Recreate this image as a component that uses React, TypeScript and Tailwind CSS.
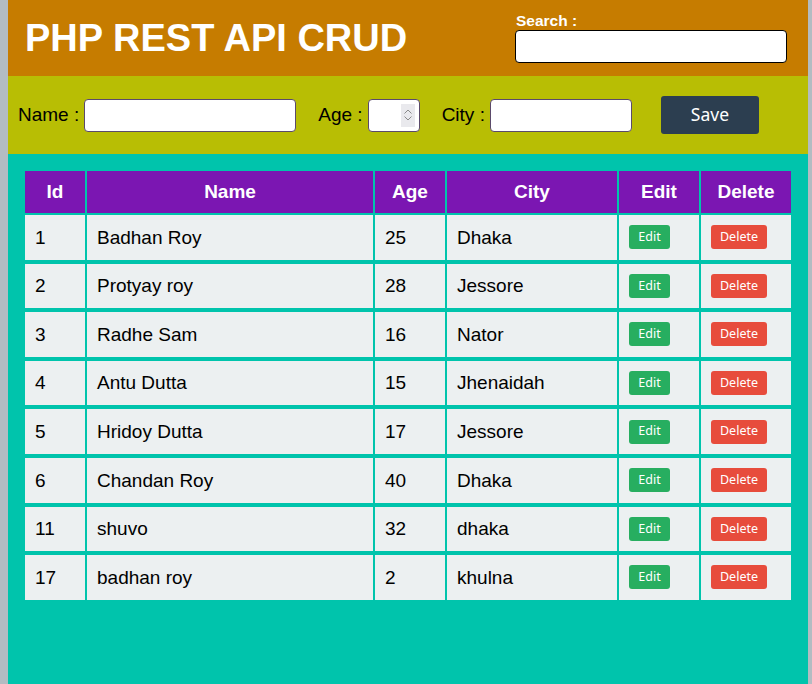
import React from "react";

const rows = [
  { id: "1", name: "Badhan Roy", age: "25", city: "Dhaka" },
  { id: "2", name: "Protyay roy", age: "28", city: "Jessore" },
  { id: "3", name: "Radhe Sam", age: "16", city: "Nator" },
  { id: "4", name: "Antu Dutta", age: "15", city: "Jhenaidah" },
  { id: "5", name: "Hridoy Dutta", age: "17", city: "Jessore" },
  { id: "6", name: "Chandan Roy", age: "40", city: "Dhaka" },
  { id: "11", name: "shuvo", age: "32", city: "dhaka" },
  { id: "17", name: "badhan roy", age: "2", city: "khulna" },
];

const cols = "grid grid-cols-[60px_286px_70px_170px_80px_90px] gap-x-[2px]";

export default function App() {
  return (
    <div className="min-h-[684px] bg-[#b3bcc2] pl-[8px] pr-[4px] font-['Liberation_Sans',Arial,sans-serif]">
      <div className="w-[800px] min-h-[684px] flex flex-col bg-[#00c4ac]">
        <header className="h-[76px] bg-[#c67c00] flex items-center justify-between pl-[17px] pr-[21px]">
          <h1 className="text-white font-bold text-[38px] leading-none">PHP REST API CRUD</h1>
          <div className="flex flex-col w-[272px] -mt-[2px]">
            <label className="text-white font-bold text-[15.5px] leading-[18px] pl-[1px]">Search :</label>
            <input className="h-[33px] w-[272px] bg-white border border-black rounded-[4px] outline-none" />
          </div>
        </header>
        <div className="h-[78px] bg-[#b8be04] flex items-center pl-[10px] text-[19px] text-black">
          <span>Name :</span>
          <input className="ml-[5px] h-[33px] w-[212px] bg-white border border-[#5b4a6b] rounded-[4px] outline-none" />
          <span className="ml-[22px]">Age :</span>
          <div className="relative ml-[5px] h-[33px] w-[52px] bg-white border border-[#5b4a6b] rounded-[4px]">
            <div className="absolute right-[4px] top-[4px] w-[14px] h-[23px] bg-[#e9e9ed] flex flex-col items-center justify-center gap-[2px]">
              <svg width="8" height="5" viewBox="0 0 8 5"><path d="M0.5 4.5 L4 1 L7.5 4.5" fill="none" stroke="#8a8a8a" strokeWidth="1" /></svg>
              <svg width="8" height="5" viewBox="0 0 8 5"><path d="M0.5 0.5 L4 4 L7.5 0.5" fill="none" stroke="#8a8a8a" strokeWidth="1" /></svg>
            </div>
          </div>
          <span className="ml-[22px]">City :</span>
          <input className="ml-[5px] h-[33px] w-[142px] bg-white border border-[#5b4a6b] rounded-[4px] outline-none" />
          <button className="ml-[29px] -mt-[1px] h-[38px] w-[98px] bg-[#2c3e50] rounded-[3px] text-white text-[17.5px] font-['Noto_Sans',sans-serif]">Save</button>
        </div>
        <div className="p-[17px]">
          <div className="flex flex-col">
            <div className={`${cols} h-[42px]`}>
              {["Id", "Name", "Age", "City", "Edit", "Delete"].map((h) => (
                <div key={h} className="bg-[#7b16b2] text-white font-bold text-[19px] flex items-center justify-center">
                  {h}
                </div>
              ))}
            </div>
            <div className="flex flex-col gap-y-[4px] mt-[2px]">
              {rows.map((r) => (
                <div key={r.id} className={`${cols} h-[44.6px]`}>
                  <div className="bg-[#ecf0f1] flex items-center pl-[10px] pt-[1px] text-[19px] text-black">{r.id}</div>
                  <div className="bg-[#ecf0f1] flex items-center pl-[10px] pt-[1px] text-[19px] text-black">{r.name}</div>
                  <div className="bg-[#ecf0f1] flex items-center pl-[10px] pt-[1px] text-[19px] text-black">{r.age}</div>
                  <div className="bg-[#ecf0f1] flex items-center pl-[10px] pt-[1px] text-[19px] text-black">{r.city}</div>
                  <div className="bg-[#ecf0f1] flex items-center pl-[10px]">
                    <button className="h-[24px] w-[41px] bg-[#27ae60] rounded-[3px] text-white text-[12.5px] font-['Noto_Sans',sans-serif] leading-none">Edit</button>
                  </div>
                  <div className="bg-[#ecf0f1] flex items-center pl-[10px]">
                    <button className="h-[24px] w-[56px] bg-[#e74c3c] rounded-[3px] text-white text-[12.5px] font-['Noto_Sans',sans-serif] leading-none">Delete</button>
                  </div>
                </div>
              ))}
            </div>
          </div>
        </div>
      </div>
    </div>
  );
}
